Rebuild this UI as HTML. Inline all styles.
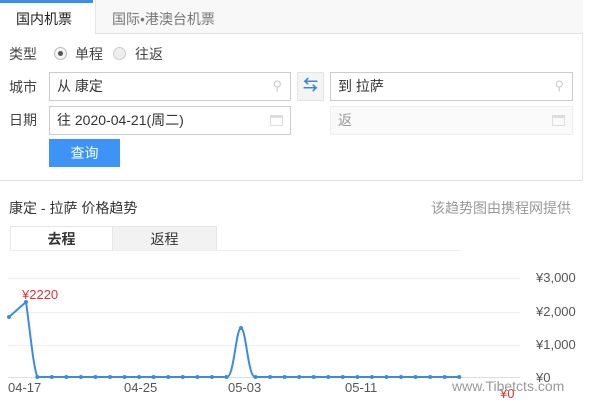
<!DOCTYPE html>
<html><head><meta charset="utf-8"><style>
*{margin:0;padding:0;box-sizing:border-box}
body{width:600px;height:400px;background:#fff;font-family:"Liberation Sans","Noto Sans CJK SC",sans-serif;position:relative;overflow:hidden;color:#333}
.a{position:absolute}
.box{position:absolute;border:1px solid #ccc;background:#fff;font-size:14px;line-height:26px;padding-left:7px;color:#333}
.lbl{position:absolute;font-size:14px;color:#444}
</style></head><body>
<div class="a" style="left:0;top:0;width:583px;height:181px;border-right:1px solid #e6e6e6;border-bottom:1px solid #e0e0e0"></div>
<div class="a" style="left:95px;top:0;width:488px;height:34px;background:#f8f8f8;border-bottom:1px solid #e2e2e2;border-left:1px solid #e6e6e6"></div>
<div class="a" style="left:0;top:0;width:93px;height:3px;background:#3c8fe8"></div>
<div class="lbl" style="left:16px;top:9px;color:#222">国内机票</div>
<div class="lbl" style="left:112px;top:9px;color:#777">国际•港澳台机票</div>
<div class="lbl" style="left:9px;top:44px">类型</div>
<div class="a" style="left:54px;top:47px;width:13px;height:13px;border:1px solid #bbb;border-radius:50%;background:#f4f4f4"><div class="a" style="left:3px;top:3px;width:5px;height:5px;border-radius:50%;background:#555"></div></div>
<div class="lbl" style="left:75px;top:44px">单程</div>
<div class="a" style="left:113px;top:47px;width:13px;height:13px;border:1px solid #ccc;border-radius:50%;background:#eee"></div>
<div class="lbl" style="left:135px;top:44px">往返</div>
<div class="lbl" style="left:9px;top:77px">城市</div>
<div class="lbl" style="left:9px;top:110px">日期</div>
<div class="box" style="left:49px;top:72px;width:242px;height:29px">从 康定<span class="a" style="right:8px;top:0;color:#ccc;font-size:13px">⚲</span></div>
<div class="box" style="left:49px;top:106px;width:242px;height:29px">往 2020-04-21(周二)<span class="a" style="right:7px;top:8px;width:13px;height:11px;border:1px solid #ddd;border-top:3px solid #ddd"></span></div>
<div class="a" style="left:297px;top:72px;width:27px;height:29px;background:#f4f4f4;border:1px solid #e4e4e4;color:#3a87d8;font-size:15px;text-align:center;line-height:26px;font-weight:bold">⇆</div>
<div class="box" style="left:330px;top:72px;width:243px;height:29px">到 拉萨<span class="a" style="right:8px;top:0;color:#ccc;font-size:13px">⚲</span></div>
<div class="box" style="left:330px;top:106px;width:243px;height:29px;background:#fafafa;border-color:#eee;color:#999">返<span class="a" style="right:7px;top:8px;width:13px;height:11px;border:1px solid #ddd;border-top:3px solid #ddd"></span></div>
<div class="a" style="left:49px;top:139px;width:71px;height:28px;background:#3d94f6;color:#fff;font-size:14px;text-align:center;line-height:28px">查询</div>
<div class="lbl" style="left:9px;top:198px;color:#333">康定 - 拉萨 价格趋势</div>
<div class="lbl" style="left:431px;top:198px;color:#999">该趋势图由携程网提供</div>
<div class="a" style="left:10px;top:226px;width:103px;height:25px;border:1px solid #e6e6e6;border-bottom:none;text-align:center;font-size:14px;line-height:24px;font-weight:bold">去程</div>
<div class="a" style="left:113px;top:226px;width:104px;height:25px;background:#f2f2f2;border-top:1px solid #e6e6e6;border-right:1px solid #e6e6e6;text-align:center;font-size:14px;line-height:24px">返程</div>
<div class="a" style="left:10px;top:250px;width:450px;height:1px;background:#eee"></div>
<svg class="a" style="left:0;top:0" width="600" height="400">
<g stroke="#eee" stroke-width="1"><line x1="8" y1="278.5" x2="520" y2="278.5"/><line x1="8" y1="312.5" x2="520" y2="312.5"/><line x1="8" y1="345.5" x2="520" y2="345.5"/></g>
<line x1="8" y1="377.5" x2="520" y2="377.5" stroke="#ddd"/>
<path fill="none" stroke="#3b8be6" stroke-width="2" d="M9,317 L26,302 C30,330 33,365 37.3,377 L227,377 C234,377 236,328 241,328 C246,328 248,377 255,377 L460,377"/>
<g fill="#3b8be6" id="d"></g>
<g font-size="13" fill="#555" font-family="Liberation Sans,Noto Sans CJK SC,sans-serif">
<text x="536" y="282">¥3,000</text><text x="536" y="316">¥2,000</text><text x="536" y="349">¥1,000</text><text x="536" y="382">¥0</text>
<text x="8" y="392">04-17</text><text x="124" y="392">04-25</text><text x="228" y="392">05-03</text><text x="345" y="392">05-11</text>
<text x="22" y="299" fill="#d33">¥2220</text><text x="500" y="398" fill="#d33">¥0</text>
<text x="452" y="391" fill="#999" font-size="14">www.Tibetcts.com</text>
</g>
</svg>
<script>
var g=document.getElementById('d'),s='<circle cx="9" cy="317" r="2"/><circle cx="26" cy="302" r="2"/>';
for(var k=0;k<=29;k++){var x=37.3+k*14.55;var y=(k==14)?328:377;s+='<circle cx="'+x+'" cy="'+y+'" r="2"/>';}
g.innerHTML=s;
</script>
</body></html>
